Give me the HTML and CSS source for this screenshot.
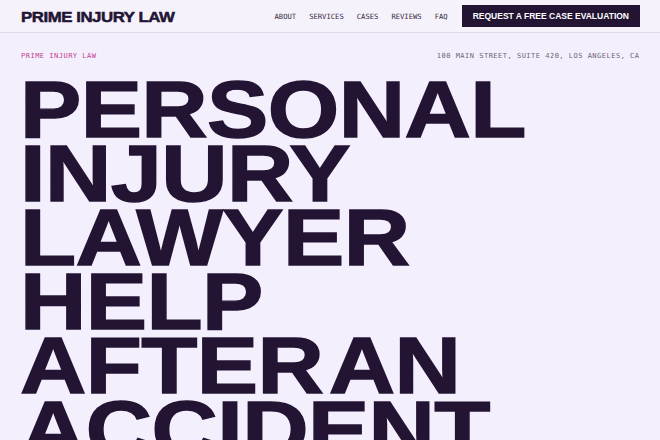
FILE: index.html
```html
<!DOCTYPE html>
<html lang="en">
<head>
<meta charset="utf-8">
<title>Prime Injury Law</title>
<link rel="stylesheet" href="styles.css">
</head>
<body>
<header class="site-header">
  <a class="logo" href="#">PRIME INJURY LAW</a>
  <div class="header-right">
    <nav class="main-nav">
      <a href="#">ABOUT</a>
      <a href="#">SERVICES</a>
      <a href="#">CASES</a>
      <a href="#">REVIEWS</a>
      <a href="#">FAQ</a>
    </nav>
    <a class="cta" href="#">REQUEST A FREE CASE EVALUATION</a>
  </div>
</header>
<main class="hero">
  <div class="meta-row">
    <span class="meta-brand">PRIME INJURY LAW</span>
    <span class="meta-address">100 MAIN STREET, SUITE 420, LOS ANGELES, CA</span>
  </div>
  <h1 class="headline">
    <span class="line">PERSONAL</span>
    <span class="line">INJURY</span>
    <span class="line">LAWYER</span>
    <span class="line">HELP</span>
    <span class="line">AFTER AN</span>
    <span class="line">ACCIDENT</span>
  </h1>
</main>
</body>
</html>
```
FILE: styles.css
```css
html, body {
  margin: 0;
  padding: 0;
}
body {
  background: #f4effc;
  color: #231433;
  font-family: "Liberation Sans", Arial, sans-serif;
  overflow: hidden;
}
a {
  text-decoration: none;
  color: inherit;
}
.site-header {
  display: flex;
  justify-content: space-between;
  align-items: center;
  height: 32px;
  padding: 0 20px 0 20px;
  background: #f6f2fc;
  border-bottom: 1px solid #e1dbe9;
}
.logo {
  display: inline-block;
  font-weight: 700;
  font-size: 15px;
  letter-spacing: -0.4px;
  -webkit-text-stroke: 0.5px #231433;
  color: #231433;
  transform: scaleX(1.12);
  transform-origin: left center;
  margin-left: 1px;
}
.header-right {
  display: flex;
  align-items: center;
}
.main-nav {
  display: flex;
  gap: 13px;
  margin-right: 14px;
}
.main-nav a {
  font-family: "DejaVu Sans Mono", "Liberation Mono", monospace;
  font-size: 7.2px;
  color: #342c40;
}
.cta {
  display: flex;
  align-items: center;
  height: 22px;
  padding: 0 11px;
  background: #231433;
  color: #ffffff;
  font-weight: 700;
  font-size: 8.5px;
  box-sizing: border-box;
  margin-top: -1px;
}
.hero {
  padding: 18px 21px 0 21px;
}
.meta-row {
  display: flex;
  justify-content: space-between;
  align-items: center;
  height: 10px;
  font-family: "DejaVu Sans Mono", "Liberation Mono", monospace;
  font-size: 7px;
  letter-spacing: 0.5px;
}
.meta-brand {
  color: #c2408f;
}
.meta-address {
  color: #6d6678;
  margin-right: -0.5px;
}
.headline {
  width: max-content;
  margin: 17px 0 0 -1px;
  font-weight: 700;
  font-size: 80px;
  line-height: 64px;
  letter-spacing: -0.5px;
  word-spacing: -14px;
  -webkit-text-stroke: 1.4px #231433;
  color: #231433;
  transform: scaleX(1.148);
  transform-origin: left top;
}
.line {
  display: block;
  white-space: nowrap;
}
```
